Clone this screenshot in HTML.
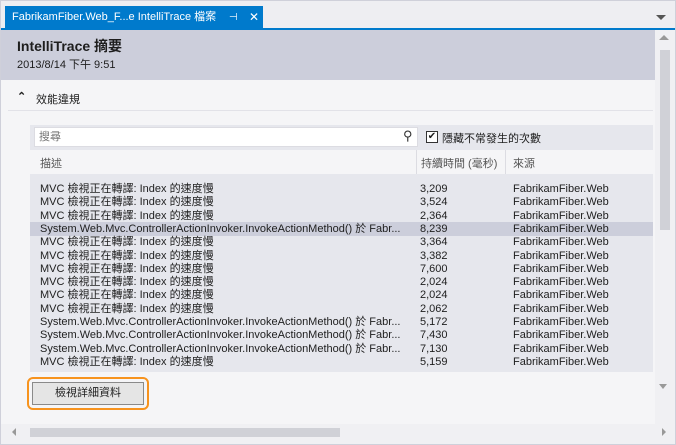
<!DOCTYPE html>
<html><head><meta charset="utf-8"><style>
*{margin:0;padding:0;box-sizing:border-box}
body{width:676px;height:445px;overflow:hidden;background:#fff;font-family:"Liberation Sans","Noto Sans CJK TC",sans-serif;color:#1e1e1e;position:relative}
.abs{position:absolute}
.row{position:absolute;left:0;width:623px;height:13.3px;font-size:11px;line-height:13.3px;white-space:nowrap}
.row span{position:absolute}
</style></head><body>
<div class="abs" style="left:0;top:0;width:676px;height:445px;border:1px solid #cfd0da;background:#eeeef2"></div>
<div class="abs" style="left:5px;top:6px;width:258px;height:23px;background:#007acc;color:#fff;font-size:11px;line-height:23px;padding-left:7px;white-space:nowrap">FabrikamFiber.Web_F...e IntelliTrace 檔案<span style="position:absolute;left:224px;top:0;font-size:10px">⊣</span><span style="position:absolute;left:244px;top:0;font-size:12px">✕</span></div>
<div class="abs" style="left:656px;top:15px;width:0;height:0;border-left:5px solid transparent;border-right:5px solid transparent;border-top:5px solid #555"></div>
<div class="abs" style="left:1px;top:28px;width:674px;height:2px;background:#007acc"></div>
<div class="abs" style="left:1px;top:30px;width:654px;height:50px;background:#cccedb"></div>
<div class="abs" style="left:17px;top:36px;font-size:14px;font-weight:bold">IntelliTrace 摘要</div>
<div class="abs" style="left:17px;top:56px;font-size:11px">2013/8/14 下午 9:51</div>
<div class="abs" style="left:1px;top:80px;width:654px;height:344px;background:#f5f5f7"></div>
<div class="abs" style="left:17px;top:90px;font-size:11px;font-weight:bold">⌃</div>
<div class="abs" style="left:36px;top:91px;font-size:11px">效能違規</div>
<div class="abs" style="left:8px;top:110px;width:645px;height:1px;background:#e2e2e8"></div>
<div class="abs" style="left:30px;top:125px;width:623px;height:247px;background:#e6e7ed"></div>
<div class="abs" style="left:34px;top:127px;width:384px;height:20px;background:#fff;border:1px solid #dcdce2;font-size:11px;color:#777;line-height:18px;padding-left:4px">搜尋</div>
<div class="abs" style="left:403px;top:128px;font-size:13px;color:#333">⚲</div>
<div class="abs" style="left:426px;top:131px;width:12px;height:12px;border:1px solid #333;background:#fff;font-size:10px;line-height:10px;text-align:center">✔</div>
<div class="abs" style="left:442px;top:130px;font-size:11px">隱藏不常發生的次數</div>
<div class="abs" style="left:30px;top:150px;width:623px;height:24px;background:#f5f5f7"></div>
<div class="abs" style="left:416px;top:150px;width:1px;height:24px;background:#dcdce2"></div>
<div class="abs" style="left:505px;top:150px;width:1px;height:24px;background:#dcdce2"></div>
<div class="abs" style="left:40px;top:155px;font-size:11px;color:#555">描述</div>
<div class="abs" style="left:421px;top:155px;font-size:11px;color:#555">持續時間 (毫秒)</div>
<div class="abs" style="left:513px;top:155px;font-size:11px;color:#555">來源</div>
<div class="abs" style="left:30px;top:222px;width:623px;height:14px;background:#cccedb"></div>
<div class="abs" style="left:30px;top:183px">
<div class="row" style="top:0"><span style="left:10px">MVC 檢視正在轉譯: Index 的速度慢</span><span style="left:390px">3,209</span><span style="left:483px">FabrikamFiber.Web</span></div>
<div class="row" style="top:13.3px"><span style="left:10px">MVC 檢視正在轉譯: Index 的速度慢</span><span style="left:390px">3,524</span><span style="left:483px">FabrikamFiber.Web</span></div>
<div class="row" style="top:26.6px"><span style="left:10px">MVC 檢視正在轉譯: Index 的速度慢</span><span style="left:390px">2,364</span><span style="left:483px">FabrikamFiber.Web</span></div>
<div class="row" style="top:39.9px"><span style="left:10px">System.Web.Mvc.ControllerActionInvoker.InvokeActionMethod() 於 Fabr...</span><span style="left:390px">8,239</span><span style="left:483px">FabrikamFiber.Web</span></div>
<div class="row" style="top:53.2px"><span style="left:10px">MVC 檢視正在轉譯: Index 的速度慢</span><span style="left:390px">3,364</span><span style="left:483px">FabrikamFiber.Web</span></div>
<div class="row" style="top:66.5px"><span style="left:10px">MVC 檢視正在轉譯: Index 的速度慢</span><span style="left:390px">3,382</span><span style="left:483px">FabrikamFiber.Web</span></div>
<div class="row" style="top:79.8px"><span style="left:10px">MVC 檢視正在轉譯: Index 的速度慢</span><span style="left:390px">7,600</span><span style="left:483px">FabrikamFiber.Web</span></div>
<div class="row" style="top:93.1px"><span style="left:10px">MVC 檢視正在轉譯: Index 的速度慢</span><span style="left:390px">2,024</span><span style="left:483px">FabrikamFiber.Web</span></div>
<div class="row" style="top:106.4px"><span style="left:10px">MVC 檢視正在轉譯: Index 的速度慢</span><span style="left:390px">2,024</span><span style="left:483px">FabrikamFiber.Web</span></div>
<div class="row" style="top:119.7px"><span style="left:10px">MVC 檢視正在轉譯: Index 的速度慢</span><span style="left:390px">2,062</span><span style="left:483px">FabrikamFiber.Web</span></div>
<div class="row" style="top:133px"><span style="left:10px">System.Web.Mvc.ControllerActionInvoker.InvokeActionMethod() 於 Fabr...</span><span style="left:390px">5,172</span><span style="left:483px">FabrikamFiber.Web</span></div>
<div class="row" style="top:146.3px"><span style="left:10px">System.Web.Mvc.ControllerActionInvoker.InvokeActionMethod() 於 Fabr...</span><span style="left:390px">7,430</span><span style="left:483px">FabrikamFiber.Web</span></div>
<div class="row" style="top:159.6px"><span style="left:10px">System.Web.Mvc.ControllerActionInvoker.InvokeActionMethod() 於 Fabr...</span><span style="left:390px">7,130</span><span style="left:483px">FabrikamFiber.Web</span></div>
<div class="row" style="top:172.9px"><span style="left:10px">MVC 檢視正在轉譯: Index 的速度慢</span><span style="left:390px">5,159</span><span style="left:483px">FabrikamFiber.Web</span></div>
</div>
<div class="abs" style="left:27px;top:377px;width:122px;height:33px;border:2px solid #f7931e;border-radius:6px"></div>
<div class="abs" style="left:32px;top:382px;width:112px;height:23px;background:#e5e5e5;border:1px solid #8a8a8a;font-size:11px;text-align:center;line-height:21px">檢視詳細資料</div>
<div class="abs" style="left:655px;top:30px;width:20px;height:394px;background:#f0f0f3"></div>
<div class="abs" style="left:659px;top:35px;border-left:5px solid transparent;border-right:5px solid transparent;border-bottom:5px solid #999"></div>
<div class="abs" style="left:660px;top:50px;width:10px;height:180px;background:#d0d1d7"></div>
<div class="abs" style="left:659px;top:384px;border-left:4px solid transparent;border-right:4px solid transparent;border-top:5px solid #999"></div>
<div class="abs" style="left:1px;top:424px;width:674px;height:20px;background:#f0f0f3"></div>
<div class="abs" style="left:12px;top:428px;border-top:4px solid transparent;border-bottom:4px solid transparent;border-right:4px solid #999"></div>
<div class="abs" style="left:30px;top:428px;width:310px;height:9px;background:#d0d1d7"></div>
<div class="abs" style="left:662px;top:428px;border-top:4px solid transparent;border-bottom:4px solid transparent;border-left:4px solid #999"></div>
</body></html>
